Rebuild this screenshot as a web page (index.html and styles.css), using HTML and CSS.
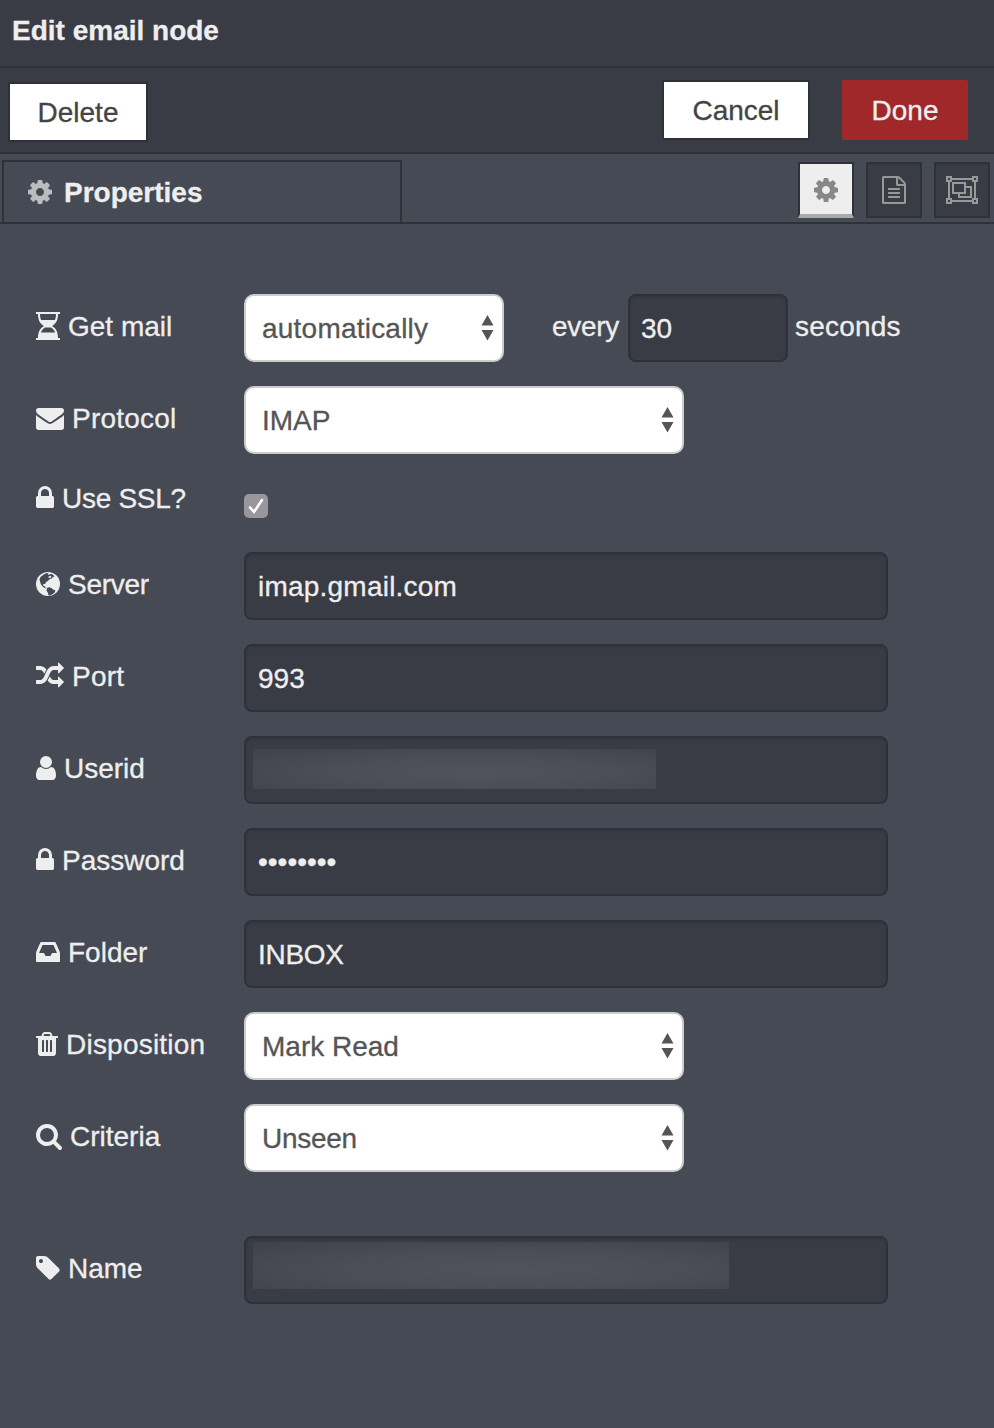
FILE: index.html
```html
<!DOCTYPE html>
<html lang="en">
<head>
<meta charset="utf-8">
<title>Edit email node</title>
<link rel="stylesheet" href="styles.css">
</head>
<body>
<svg class="sprite" aria-hidden="true">
  <symbol id="cog" viewBox="0 0 1792 1792"><path d="M1152 896q0-106-75-181t-181-75-181 75-75 181 75 181 181 75 181-75 75-181zm512-109v222q0 12-8 23t-20 13l-185 28q-19 54-39 91 35 50 107 138 10 12 10 25t-9 23q-27 37-99 108t-94 71q-12 0-26-9l-138-108q-44 23-91 38-16 136-29 186-7 28-36 28h-222q-14 0-24.5-8.5t-11.5-21.5l-28-184q-49-16-90-37l-141 107q-10 9-25 9-14 0-25-11-126-114-165-168-7-10-7-23 0-12 8-23 15-21 51-66.5t54-70.5q-27-50-41-99l-183-27q-13-2-21-12.5t-8-23.5v-222q0-12 8-23t19-13l186-28q14-46 39-92-40-57-107-138-10-12-10-24 0-10 9-23 26-36 98.5-107.5t94.5-71.5q13 0 26 10l138 107q44-23 91-38 16-136 29-186 7-28 36-28h222q14 0 24.5 8.5t11.5 21.5l28 184q49 16 90 37l142-107q9-9 24-9 13 0 25 10 129 119 165 170 7 8 7 22 0 12-8 23-15 21-51 66.5t-54 70.5q26 50 41 98l183 28q13 2 21 12.5t8 23.5z"/></symbol>
  <symbol id="lock" viewBox="320 0 1152 1792"><path d="M640 768h512v-192q0-106-75-181t-181-75-181 75-75 181v192zm832 96v576q0 40-28 68t-68 28h-960q-40 0-68-28t-28-68v-576q0-40 28-68t68-28h32v-192q0-184 132-316t316-132 316 132 132 316v192h32q40 0 68 28t28 68z"/></symbol>
</svg>
<header class="title">Edit email node</header>
<div class="toolbar">
  <button class="btn">Delete</button>
  <div class="toolbar-right">
    <button class="btn cancel">Cancel</button>
    <button class="btn primary">Done</button>
  </div>
</div>
<nav class="tabs">
  <div class="tab"><svg class="icon cog"><use href="#cog"/></svg><span>Properties</span></div>
  <div class="tab-buttons">
    <button class="square active"><svg class="icon cog"><use href="#cog"/></svg></button>
    <button class="square"><svg class="icon" viewBox="0 0 1792 1792"><path d="M1596 380q28 28 48 76t20 88v1152q0 40-28 68t-68 28h-1344q-40 0-68-28t-28-68v-1600q0-40 28-68t68-28h896q40 0 88 20t76 48zm-444-244v376h376q-10-29-22-41l-313-313q-12-12-41-22zm384 1528v-1024h-416q-40 0-68-28t-28-68v-416h-768v1536h1280zm-1024-864q0-14 9-23t23-9h704q14 0 23 9t9 23v64q0 14-9 23t-23 9h-704q-14 0-23-9t-9-23v-64zm736 224q14 0 23 9t9 23v64q0 14-9 23t-23 9h-704q-14 0-23-9t-9-23v-64q0-14 9-23t23-9h704zm0 256q14 0 23 9t9 23v64q0 14-9 23t-23 9h-704q-14 0-23-9t-9-23v-64q0-14 9-23t23-9h704z"/></svg></button>
    <button class="square"><svg class="icon group" viewBox="0 0 32 28"><g fill="none" stroke="currentColor" stroke-width="2"><path d="M6 3h20M6 25h20M3 6v16M29 6v16M1 1h4v4H1zM27 1h4v4h-4zM1 23h4v4H1zM27 23h4v4h-4zM7 7h12v10H7zM20 11h5v10H13v-3"/></g></svg></button>
  </div>
</nav>
<main class="form">
  <div class="row">
    <div class="label"><svg class="icon w24" viewBox="0 0 24 28"><path fill-rule="evenodd" d="M0 0h24v2h-2c0 5.500-1.500 9.500-6 12 4.500 2.500 6 6.500 6 12h2v2H0v-2h2c0-5.500 1.500-9.500 6-12C3.500 11.500 2 7.500 2 2H0zM4 2c0 2.200.3 4.200 1.100 6h13.800C19.700 6.200 20 4.200 20 2zM9 15.500C7 16.800 5.600 18.500 4.900 20.500h14.200c-.7-2-2.100-3.700-4.100-5z"/></svg><span>Get mail</span></div>
    <div class="select short"><span class="wide">automatically</span><svg class="arrows" viewBox="0 0 12 26"><path d="M6 0l6 10.500H0zM0 15h12L6 25.500z"/></svg></div>
    <span class="every tight">every</span><div class="input number">30</div><span class="seconds wide">seconds</span>
  </div>
  <div class="row">
    <div class="label"><svg class="icon w28" viewBox="0 0 1792 1792"><path d="M1792 710v794q0 66-47 113t-113 47h-1472q-66 0-113-47t-47-113v-794q44 49 101 87 362 246 497 345 57 42 92.5 65.5t94.5 48 110 24.5h2q51 0 110-24.5t94.5-48 92.5-65.5q170-123 498-345 57-39 100-87zm0-294q0 79-49 151t-122 123q-376 261-468 325-10 7-42.500 31t-54 38.500-52 32.500-57.500 27-50 9h-2q-23 0-50-9t-57.500-27-52-32.500-54-38.500-42.500-31q-91-64-262-182.500t-205-142.500q-62-42-117-115.500t-55-136.500q0-78 41.500-130t118.500-52h1472q65 0 112.500 47t47.500 113z"/></svg><span class="wide">Protocol</span></div>
    <div class="select"><span>IMAP</span><svg class="arrows" viewBox="0 0 12 26"><path d="M6 0l6 10.500H0zM0 15h12L6 25.500z"/></svg></div>
  </div>
  <div class="row ssl">
    <div class="label"><svg class="icon w18"><use href="#lock"/></svg><span class="tight">Use SSL?</span></div>
    <div class="check"><svg viewBox="0 0 24 24"><path d="M6 13.500l4 4.500L18 6"/></svg></div>
  </div>
  <div class="row">
    <div class="label"><svg class="icon w24" viewBox="0 0 24 28"><circle cx="12" cy="14" r="12"/><path class="land" d="M4.500 7L8 4.200l3-1.200 1.500.6-.8 1.200 2.300-.3 1-.7 2.500 1.200 1 1.700-1.800.3-.7 1.500-1.800.2-2.200 2-2 1.600-1 1.600-1.700.1-.3 1.600 1.500.4.600 1.500 1.400.3-.5.7-2-.8-1.800-1.700L4.800 14 4 11.500 3.500 9.500zM11 18l2-.8 2.500.8 1.500 1.500 2.300.8-.3 1.700-2 2-2.500 1.300-2 .3-.5-2.600-1.500-2.500z"/><path d="M12.500 6.500l2-.8 1 1-1.500 1.300-1.500-.3z"/></svg><span class="tight">Server</span></div>
    <div class="input wide">imap.gmail.com</div>
  </div>
  <div class="row">
    <div class="label"><svg class="icon w28" viewBox="0 0 1792 1792"><path d="M666 481q-60 92-137 273-22-45-37-72.500t-40.500-63.500-51-56.500-63-35-81.500-14.500h-224q-14 0-23-9t-9-23v-192q0-14 9-23t23-9h224q250 0 410 225zm1126 799q0 14-9 23l-320 320q-9 9-23 9-13 0-22.500-9.500t-9.500-22.500v-192q-32 0-85 .5t-81 1-73-1-71-5-64-10.500-63-18.500-58-28.500-59-40-55-53.500-56-69.500q59-93 136-273 22 45 37 72.500t40.500 63.500 51 56.500 63 35 81.500 14.500h256v-192q0-14 9-23t23-9q12 0 24 10l319 319q9 9 9 23zm0-896q0 14-9 23l-320 320q-9 9-23 9-13 0-22.500-9.500t-9.500-22.500v-192h-256q-48 0-87 15t-69 45-51 61.500-45 77.500q-32 62-78 171-29 66-49.500 111t-54 105-64 100-74 83-90 68.500-106.500 42-128 16.500h-224q-14 0-23-9t-9-23v-192q0-14 9-23t23-9h224q48 0 87-15t69-45 51-61.500 45-77.500q32-62 78-171 29-66 49.500-111t54-105 64-100 74-83 90-68.500 106.500-42 128-16.500h256v-192q0-14 9-23t23-9q12 0 24 10l319 319q9 9 9 23z"/></svg><span class="wide">Port</span></div>
    <div class="input">993</div>
  </div>
  <div class="row">
    <div class="label"><svg class="icon w20" viewBox="256 0 1280 1792"><path d="M1536 1399q0 109-62.500 187t-150.500 78h-854q-88 0-150.500-78t-62.500-187q0-85 8.500-160.500t31.500-152 58.500-131 94-89 134.500-34.500q131 128 313 128t313-128q76 0 134.500 34.500t94 89 58.500 131 31.500 152 8.500 160.500zm-256-887q0 159-112.500 271.500t-271.500 112.500-271.500-112.500-112.500-271.500 112.500-271.500 271.500-112.500 271.500 112.500 112.500 271.500z"/></svg><span>Userid</span></div>
    <div class="input redacted"><div class="mask user-mask"></div></div>
  </div>
  <div class="row">
    <div class="label"><svg class="icon w18"><use href="#lock"/></svg><span>Password</span></div>
    <div class="input"><span class="dots">••••••••</span></div>
  </div>
  <div class="row">
    <div class="label"><svg class="icon w24" viewBox="128 0 1536 1792"><path d="M1151 960h316q-1-3-2.500-8.500t-2.500-7.500l-212-496h-708l-212 496q-1 3-2.500 8.500t-2.500 7.500h316l95 192h320zm513 30v482q0 26-19 45t-45 19h-1408q-26 0-45-19t-19-45v-482q0-62 25-123l238-552q10-25 36.500-42t52.500-17h832q26 0 52.500 17t36.500 42l238 552q25 61 25 123z"/></svg><span>Folder</span></div>
    <div class="input tight">INBOX</div>
  </div>
  <div class="row">
    <div class="label"><svg class="icon w22" viewBox="192 0 1408 1792"><path d="M704 1376v-704q0-14-9-23t-23-9h-64q-14 0-23 9t-9 23v704q0 14 9 23t23 9h64q14 0 23-9t9-23zm256 0v-704q0-14-9-23t-23-9h-64q-14 0-23 9t-9 23v704q0 14 9 23t23 9h64q14 0 23-9t9-23zm256 0v-704q0-14-9-23t-23-9h-64q-14 0-23 9t-9 23v704q0 14 9 23t23 9h64q14 0 23-9t9-23zm-544-992h448l-48-117q-7-9-17-11h-317q-10 2-17 11zm928 32v64q0 14-9 23t-23 9h-96v948q0 83-47 143.500t-113 60.500h-832q-66 0-113-58.500t-47-141.500v-952h-96q-14 0-23-9t-9-23v-64q0-14 9-23t23-9h309l70-167q15-37 54-63t79-26h320q40 0 79 26t54 63l70 167h309q14 0 23 9t9 23z"/></svg><span class="wide">Disposition</span></div>
    <div class="select"><span>Mark Read</span><svg class="arrows" viewBox="0 0 12 26"><path d="M6 0l6 10.500H0zM0 15h12L6 25.500z"/></svg></div>
  </div>
  <div class="row">
    <div class="label"><svg class="icon w26" viewBox="64 0 1664 1792"><path d="M1216 832q0-185-131.500-316.500t-316.500-131.500-316.500 131.500-131.500 316.500 131.500 316.500 316.500 131.500 316.500-131.500 131.500-316.500zm512 832q0 52-38 90t-90 38q-54 0-90-38l-343-342q-179 124-399 124-143 0-273.500-55.500t-225-150-150-225-55.500-273.500 55.500-273.500 150-225 225-150 273.500-55.500 273.500 55.500 225 150 150 225 55.500 273.500q0 220-124 399l343 343q37 37 37 90z"/></svg><span>Criteria</span></div>
    <div class="select"><span class="tight">Unseen</span><svg class="arrows" viewBox="0 0 12 26"><path d="M6 0l6 10.500H0zM0 15h12L6 25.500z"/></svg></div>
  </div>
  <div class="row name">
    <div class="label"><svg class="icon w24" viewBox="128 0 1536 1792"><path d="M576 448q0-53-37.500-90.500t-90.500-37.500-90.500 37.500-37.500 90.500 37.500 90.500 90.500 37.500 90.500-37.500 37.500-90.500zm1067 576q0 53-37 90l-491 492q-39 37-91 37-53 0-90-37l-715-716q-38-37-64.500-101t-26.500-117v-416q0-52 38-90t90-38h416q53 0 117 26.500t102 64.500l715 714q37 39 37 91z"/></svg><span>Name</span></div>
    <div class="input redacted"><div class="mask name-mask"></div></div>
  </div>
</main>
</body>
</html>
```
FILE: styles.css
```css
* { box-sizing: border-box; }
body {
  margin: 0;
  min-height: 1428px;
  background: #464a54;
  color: #eee;
  font: 28px/32px "Liberation Sans", Arial, sans-serif;
  -webkit-text-stroke: .3px currentColor;
}
.sprite { display: none; }
svg { display: block; flex: none; fill: currentColor; }
.wide { letter-spacing: .22px; }
.tight { letter-spacing: -.28px; }
.title {
  height: 68px;
  padding: 15px 12px 0;
  background: #3a3c45;
  border-bottom: 2px solid #2f3139;
  font-weight: bold;
}
.toolbar {
  display: flex;
  justify-content: space-between;
  height: 86px;
  padding: 14px 26px 0 8px;
  background: #3a3c45;
  border-bottom: 2px solid #2f3139;
}
.toolbar-right { display: flex; gap: 32px; margin-top: -2px; }
.btn {
  height: 60px;
  width: 140px;
  padding: 2px 0 0;
  border: 2px solid #2f3139;
  border-radius: 2px;
  background: #fff;
  color: #444;
  font: inherit;
}
.btn.cancel { width: 148px; }
.btn.primary { width: 126px; background: #a0282b; border-color: #a0282b; color: #eee; }
.tabs {
  display: flex;
  justify-content: space-between;
  height: 70px;
  padding: 6px 4px 0 2px;
  border-bottom: 2px solid #2f3139;
}
.tab {
  display: flex;
  align-items: center;
  gap: 10px;
  width: 400px;
  padding: 0 0 0 22px;
  border: 2px solid #2f3139;
  border-bottom: 0;
  font-weight: bold;
}
.tab span { padding-top: 2px; }
.tab .icon { color: #bbbcc0; }
.tab-buttons { display: flex; gap: 12px; padding-top: 2px; }
.square {
  display: flex;
  align-items: center;
  justify-content: center;
  width: 56px;
  height: 56px;
  padding: 0;
  background: #3a3c45;
  border: 2px solid #2f3139;
  color: #999;
}
.square.active { padding-top: 2px; background: #eee; color: #888; border-bottom: 4px solid #aaa; }
.icon { width: 28px; height: 28px; }
.icon.group { width: 32px; }
.w18 { width: 18px; }
.w20 { width: 20px; }
.w22 { width: 22px; }
.w24 { width: 24px; }
.w26 { width: 26px; }
.form { display: flex; flex-direction: column; gap: 24px; padding: 70px 36px 0; }
.row { display: flex; height: 68px; }
.label { display: flex; gap: 8px; width: 208px; padding-top: 17px; white-space: nowrap; }
.label .icon { margin-top: 1px; }
.select, .input {
  display: flex;
  align-items: center;
  height: 68px;
  border: 2px solid #ccc;
  border-radius: 8px;
}
.select {
  justify-content: space-between;
  width: 440px;
  padding: 0 8px 0 16px;
  background: #fff;
  border-radius: 10px;
  color: #555;
}
.select span { padding-top: 2px; }
.select.short { width: 260px; }
.arrows { width: 13px; height: 26px; }
.input {
  width: 644px;
  padding: 2px 12px 0;
  background: #3a3c45;
  border-color: #2f3139;
  box-shadow: inset 0 2px 2px rgba(0, 0, 0, .08);
}
.input.number { width: 160px; padding: 2px 11px 0; }
.every { width: 76px; margin-left: 48px; padding-top: 17px; }
.seconds { margin-left: 7px; padding-top: 17px; }
.ssl { height: 50px; }
.ssl .label { padding-top: 5px; }
.check {
  width: 24px;
  height: 24px;
  margin-top: 16px;
  background: #98979c;
  border-radius: 5px;
}
.check path { fill: none; stroke: #fff; stroke-width: 2.6; stroke-linecap: round; }
.land { fill: #464a54; }
.input.redacted { align-items: flex-start; padding: 0 7px; }
.mask { background: radial-gradient(ellipse at 55% 60%, #50535b 0%, #4b4e56 45%, #40424b 100%); }
.user-mask { width: 403px; height: 40px; margin-top: 11px; }
.name-mask { width: 476px; height: 47px; margin-top: 4px; }
.dots { margin-top: -3px; }
.name { margin-top: 40px; }
```
